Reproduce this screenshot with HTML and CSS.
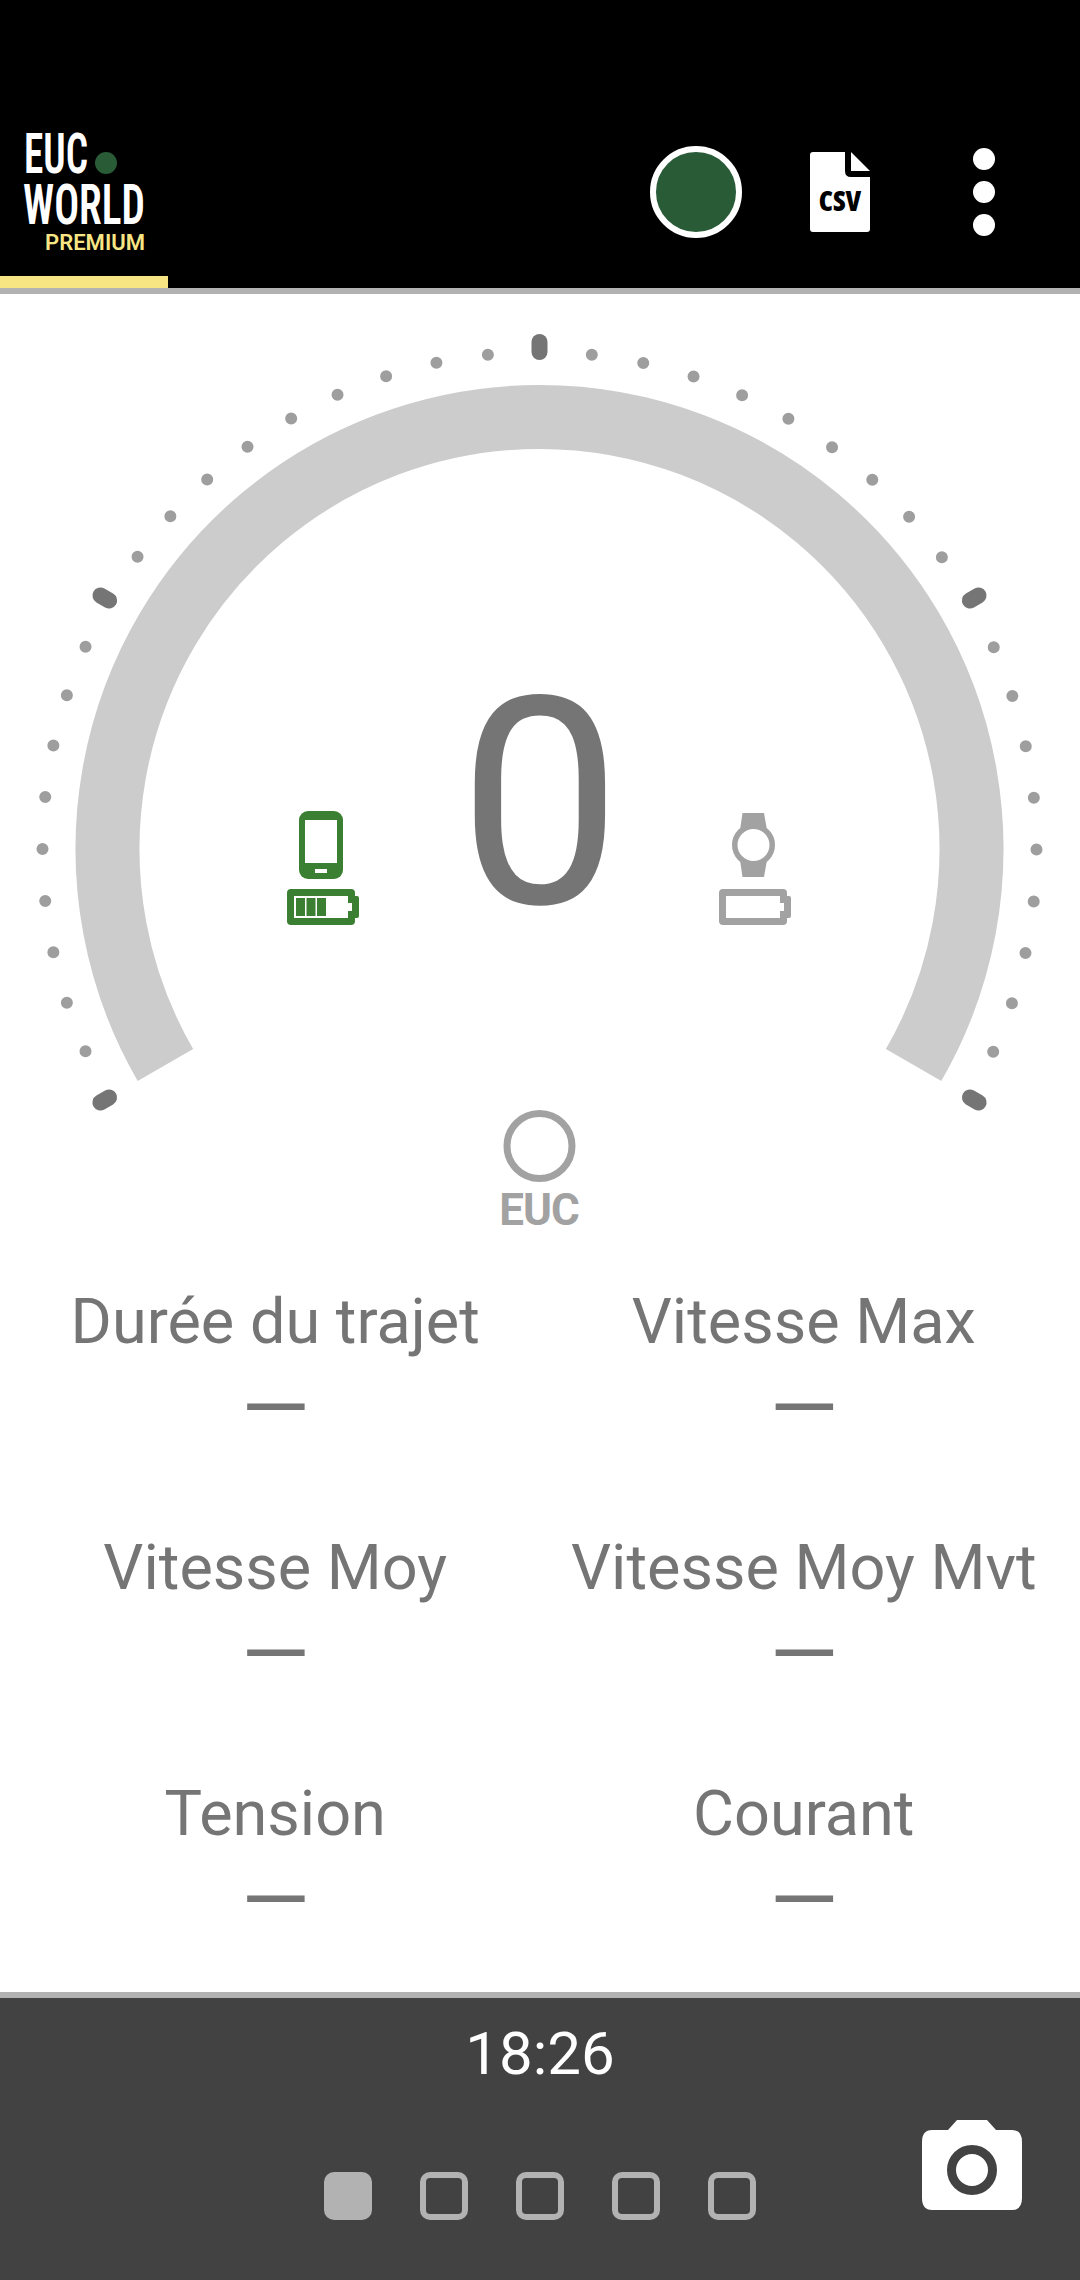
FILE: index.html
```html
<html>
    <head>
        <meta charset="utf-8">
        <title>EUC World</title>
        <link rel="stylesheet" href="styles.css">
    </head>
    <body>
        <div class="header">
            <div class="header-main">
                <svg class="logo" viewBox="20 112 160 160" width="160" height="160">
                    <text class="logo-big" x="24" y="173" textLength="64" lengthAdjust="spacingAndGlyphs">EUC</text>
                    <circle cx="106" cy="163" r="11" fill="#285b36"/>
                    <text class="logo-big" x="23" y="224" textLength="122" lengthAdjust="spacingAndGlyphs">WORLD</text>
                    <text class="logo-small" x="45" y="250" textLength="100" lengthAdjust="spacingAndGlyphs">PREMIUM</text>
                </svg>
                <div class="actions">
                    <div class="status"></div>
                    <svg class="csv" viewBox="0 0 60 80" width="60" height="80">
                        <path d="M3 0H35V19Q35 25 41 25H60V77Q60 80 57 80H3Q0 80 0 77V3Q0 0 3 0Z" fill="#fff"/>
                        <path d="M41 0L60 19H41Z" fill="#fff"/>
                        <text class="csv-text" x="30" y="59">CSV</text>
                    </svg>
                    <div class="menu">
                        <span></span>
                        <span></span>
                        <span></span>
                    </div>
                </div>
            </div>
            <div class="progress"></div>
        </div>

        <!-- gauge uses page coordinates, centre is 539.5,849 -->
        <svg class="gauge" viewBox="0 294 1080 950" width="1080" height="950">
            <path class="arc" d="M165.4 1065A432 432 0 1 1 913.6 1065"/>
            <path class="dots" d="M109.1 1097.500A497 497 0 1 1 969.900 1097.500"/>
            <line class="major" x1="539.500" y1="342" x2="539.500" y2="352" transform="rotate(-120 539.500 849)"/>
            <line class="major" x1="539.500" y1="342" x2="539.500" y2="352" transform="rotate(-60 539.500 849)"/>
            <line class="major" x1="539.500" y1="342" x2="539.500" y2="352"/>
            <line class="major" x1="539.500" y1="342" x2="539.500" y2="352" transform="rotate(60 539.500 849)"/>
            <line class="major" x1="539.500" y1="342" x2="539.500" y2="352" transform="rotate(120 539.500 849)"/>

            <text class="speed" x="540" y="903">0</text>

            <!-- phone -->
            <rect x="299" y="811" width="44" height="68" rx="9" fill="#3b7f32"/>
            <rect x="305" y="820" width="32" height="43" fill="#fff"/>
            <rect x="315" y="869" width="12" height="4" fill="#fff"/>
            <rect x="287" y="889" width="68" height="36" rx="4" fill="#3b7f32"/>
            <rect x="352" y="896" width="7" height="22" rx="2" fill="#3b7f32"/>
            <rect x="294" y="896" width="54" height="22" fill="#fff"/>
            <rect x="348" y="903" width="4" height="8" fill="#fff"/>
            <rect x="296" y="898" width="9" height="18" fill="#3b7f32"/>
            <rect x="306.500" y="898" width="9" height="18" fill="#3b7f32"/>
            <rect x="317" y="898" width="9" height="18" fill="#3b7f32"/>

            <!-- watch -->
            <path d="M742.500 813H764L767 830H740ZM740 860H767L764 877H742.500Z" fill="#a2a2a2"/>
            <circle cx="753.500" cy="845" r="18.750" fill="#fff" stroke="#a2a2a2" stroke-width="5.500"/>
            <rect x="719" y="889" width="68" height="36" rx="4" fill="#a2a2a2"/>
            <rect x="784" y="896" width="7" height="22" rx="2" fill="#a2a2a2"/>
            <rect x="726" y="896" width="54" height="22" fill="#fff"/>
            <rect x="780" y="903" width="4" height="8" fill="#fff"/>

            <circle cx="539.500" cy="1146" r="32.500" fill="none" stroke="#a2a2a2" stroke-width="7"/>
            <text class="euc" x="539" y="1225">EUC</text>
        </svg>

        <div class="stats">
            <div class="stat">
                <div>Durée du trajet</div>
                <div class="value">—</div>
            </div>
            <div class="stat">
                <div>Vitesse Max</div>
                <div class="value">—</div>
            </div>
            <div class="stat">
                <div>Vitesse Moy</div>
                <div class="value">—</div>
            </div>
            <div class="stat">
                <div>Vitesse Moy Mvt</div>
                <div class="value">—</div>
            </div>
            <div class="stat">
                <div>Tension</div>
                <div class="value">—</div>
            </div>
            <div class="stat">
                <div>Courant</div>
                <div class="value">—</div>
            </div>
        </div>

        <div class="footer">
            <div class="time">18:26</div>
            <div class="footer-row">
                <div class="pages">
                    <span class="page active"></span>
                    <span class="page"></span>
                    <span class="page"></span>
                    <span class="page"></span>
                    <span class="page"></span>
                </div>
                <svg class="camera" viewBox="0 0 100 90" width="100" height="90">
                    <path d="M35 0H65L74 10H90Q100 10 100 22V78Q100 90 90 90H10Q0 90 0 78V22Q0 10 10 10H26Z" fill="#fff"/>
                    <circle cx="50" cy="50" r="20.500" fill="#fff" stroke="#424242" stroke-width="9"/>
                </svg>
            </div>
        </div>
    </body>
</html>
```

FILE: styles.css
```css
html, body
{
    margin: 0;
    padding: 0;
    background-color: #fff;
}

body
{
    width: 1080px;
    height: 2280px;
    display: flex;
    flex-direction: column;
    overflow: hidden;
    font-family: Roboto, "Liberation Sans", sans-serif;
}

.header
{
    height: 294px;
    box-sizing: border-box;
    background-color: #000;
    border-bottom: 6px solid #b2b2b2;
}

.header-main
{
    height: 276px;
    box-sizing: border-box;
    padding: 108px 85px 0 20px;
    display: flex;
    align-items: center;
    justify-content: space-between;
}

.logo
{
    display: block;
}

.logo-big
{
    font-size: 55px;
    font-weight: 600;
    font-stretch: 75%;
    fill: #fff;
}

.logo-small
{
    font-size: 22px;
    font-weight: 600;
    fill: #f7e584;
}

.actions
{
    display: flex;
    align-items: center;
    gap: 68px;
}

.status
{
    width: 92px;
    height: 92px;
    box-sizing: border-box;
    border: 6px solid #fff;
    border-radius: 50%;
    background-color: #285b36;
}

.csv
{
    display: block;
}

.csv-text
{
    font-family: "Open Sans", sans-serif;
    font-size: 28px;
    font-weight: 800;
    font-stretch: 75%;
    fill: #000;
    text-anchor: middle;
}

.menu
{
    display: flex;
    flex-direction: column;
    gap: 11px;
    margin-left: 35px;
}

.menu span
{
    display: block;
    width: 22px;
    height: 22px;
    border-radius: 50%;
    background-color: #fff;
}

.progress
{
    width: 168px;
    height: 12px;
    background-color: #f7e584;
}

.gauge
{
    display: block;
    flex: none;
}

.arc
{
    fill: none;
    stroke: #ccc;
    stroke-width: 64;
}

.dots
{
    fill: none;
    stroke: #9e9e9e;
    stroke-width: 12;
    stroke-linecap: round;
    stroke-dasharray: 0 52.05;
}

.major
{
    stroke: #757575;
    stroke-width: 16;
    stroke-linecap: round;
}

.speed
{
    font-size: 290px;
    fill: #757575;
    text-anchor: middle;
}

.euc
{
    font-size: 44px;
    font-weight: 700;
    letter-spacing: -1px;
    fill: #a2a2a2;
    text-anchor: middle;
}

.stats
{
    flex: 1;
    padding: 0 12px 0 11px;
    display: grid;
    grid-template-columns: 1fr 1fr;
    grid-auto-rows: 246px;
}

.stat
{
    padding-top: 38px;
    text-align: center;
    font-size: 63px;
    line-height: 80px;
    color: #757575;
    white-space: nowrap;
}

.value
{
    font-size: 88px;
    line-height: 92px;
}

.footer
{
    height: 288px;
    box-sizing: border-box;
    flex: none;
    background-color: #424242;
    border-top: 6px solid #b2b2b2;
    padding-top: 20px;
}

.time
{
    height: 70px;
    line-height: 72px;
    text-align: center;
    font-size: 60px;
    color: #fff;
}

.footer-row
{
    margin-top: 32px;
    padding-right: 58px;
    display: flex;
    justify-content: flex-end;
    align-items: flex-start;
    gap: 166px;
}

.pages
{
    margin-top: 52px;
    display: flex;
    gap: 48px;
}

.page
{
    display: block;
    width: 48px;
    height: 48px;
    box-sizing: border-box;
    border: 6px solid #b2b2b2;
    border-radius: 10px;
}

.page.active
{
    background-color: #b2b2b2;
}

.camera
{
    display: block;
}
```
